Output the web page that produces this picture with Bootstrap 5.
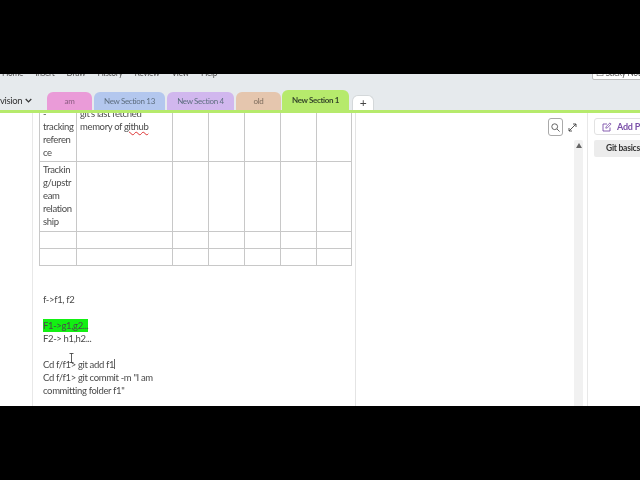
<!DOCTYPE html>
<html lang="en">
<head>
<meta charset="utf-8">
<title>Notes</title>
<link rel="stylesheet" href="https://cdn.jsdelivr.net/npm/bootstrap@5.3.0/dist/css/bootstrap.min.css">
<style>
html,body{height:100%;background:#000;overflow:hidden}
body{padding-top:74px;font-family:Lato,"Liberation Sans",sans-serif;color:#444}
.app{height:332px;width:640px;overflow:hidden;background:#e6eaed;display:flex;flex-direction:column;filter:blur(.4px)}
.menu-strip{height:6px;flex:none;display:flex;align-items:flex-end;font-size:8.5px;letter-spacing:-.35px;line-height:13px;color:#555;position:relative;padding-left:2px}
.menu-strip span{margin-right:12px;white-space:nowrap}
.sticky-btn{position:absolute;left:592px;top:-8px;width:60px;height:14px;background:#fff;border:1px solid #bbb;border-radius:2px;font-size:8.5px;line-height:12px;padding-left:3px;overflow:hidden;white-space:nowrap}
.tab-row{height:29px;flex:none;display:flex;align-items:flex-end;padding-left:47px;gap:2px;position:relative;margin-top:1px}
.vis{position:absolute;left:0;bottom:3px;font-size:9.5px;letter-spacing:-.35px;line-height:13px;color:#333;display:flex;align-items:center;gap:3px}
.stab{height:18px;border-radius:6px 6px 0 0;font-size:8px;letter-spacing:-.35px;line-height:18px;text-align:center;color:#5e6f80;white-space:nowrap}
.t-am{width:45px;background:#ea9bd8;color:#8a5a80}
.t-13{width:71px;background:#b3c7ee}
.t-4{width:67px;background:#d1b7ee}
.t-old{width:45px;background:#e5c6ae;color:#7c6b5c}
.t-act{width:67px;height:20px;background:#b6ea6c;color:#35452a;font-weight:700;line-height:20px;margin-left:-1px}
.t-add{width:22px;height:15px;background:#fff;border:1px solid #d4d8da;border-bottom:0;border-radius:6px 6px 0 0;margin-left:1px;font-size:12px;line-height:14px;color:#444}
.rule{height:3px;flex:none;background:#b6ea6c}
.work{flex:1;min-height:0;display:flex;background:#fff}
.gutter{width:33px;flex:none;border-right:1px solid #e8e8e8}
.sheet{width:323px;flex:none;border-right:1px solid #e4e4e4;overflow:hidden;padding-left:6px;font-size:9.5px;letter-spacing:-.35px;line-height:13px;color:#4a4a4a}
.grid-tbl{width:312px;table-layout:fixed;margin:-9px 0 0 0;border-color:#c8c8c8;--bs-table-color:#4a4a4a}
.grid-tbl td{padding:2px 2px 2px 3px;border:1px solid #c8c8c8;white-space:nowrap;overflow:hidden}
.grid-tbl tr.tall td{padding:1px 2px 3px 3px}
.grid-tbl tr.blank td{height:17px;padding:0}
.squig{text-decoration:underline wavy #d33;text-decoration-thickness:.6px;text-underline-offset:1px}
.prose{margin-top:27px;padding-left:4px;position:relative}
.hl{background:#12f012;display:inline-block;width:45px;white-space:nowrap}
.ibeam{position:absolute;left:30px;top:60px;width:5px;height:10px}
.caret{display:inline-block;width:1px;height:10px;background:#666;vertical-align:-1px}
.canvas{flex:1;display:flex;flex-direction:column;align-items:flex-end;padding:5px 4px 0 0;gap:4px;border-right:1px solid #e8e8e8}
.zoomrow{display:flex;gap:5px;align-items:center;margin-right:6px}
.search-btn{width:15px;height:18px;border:1px solid #aaa;border-radius:3px;display:flex;align-items:center;justify-content:center}
.scroll{width:9px;flex:1;background:#f1f1f1;display:flex;justify-content:center;padding-top:3px;border-radius:2px 2px 0 0}
.scroll i{display:block;width:0;height:0;border:3.5px solid transparent;border-top:0;border-bottom:5px solid #666}
.pane{width:52px;flex:none;padding:5px 0 0 6px;overflow:hidden}
.add-page{width:70px;height:17px;background:#fff;border:1px solid #e2e2e2;border-radius:3px;color:#7a4fa8;font-size:9px;letter-spacing:-.2px;display:flex;align-items:center;gap:5px;padding-left:7px;white-space:nowrap;font-weight:700}
.page-sel{width:70px;height:17px;margin-top:5px;background:#ececec;border-radius:2px;font-size:8.5px;letter-spacing:-.25px;line-height:16px;font-weight:700;padding-left:12px;color:#333;white-space:nowrap}
</style>
</head>
<body>
<div class="app">
  <div class="menu-strip">
    <span>Home</span><span>Insert</span><span>Draw</span><span>History</span><span>Review</span><span>View</span><span>Help</span>
    <div class="sticky-btn">☐ Sticky Notes</div>
  </div>
  <div class="tab-row">
    <div class="vis">vision <svg width="7" height="5" viewBox="0 0 7 5"><path d="M.7 1l2.8 2.8L6.3 1" fill="none" stroke="#333" stroke-width="1.2"/></svg></div>
    <div class="stab t-am">am</div>
    <div class="stab t-13">New Section 13</div>
    <div class="stab t-4">New Section 4</div>
    <div class="stab t-old">old</div>
    <div class="stab t-act">New Section 1</div>
    <div class="stab t-add">+</div>
  </div>
  <div class="rule"></div>
  <div class="work">
    <div class="gutter"></div>
    <div class="sheet">
      <table class="table table-bordered grid-tbl">
        <colgroup><col style="width:37px"><col style="width:96px"><col style="width:36px"><col style="width:36px"><col style="width:36px"><col style="width:36px"><col style="width:35px"></colgroup>
        <tr><td class="align-top">-<br>tracking<br>referen<br>ce</td><td class="align-top">git's last fetched<br>memory of <span class="squig">github</span></td><td></td><td></td><td></td><td></td><td></td></tr>
        <tr class="tall"><td class="align-top">Trackin<br>g/upstr<br>eam<br>relation<br>ship</td><td></td><td></td><td></td><td></td><td></td><td></td></tr>
        <tr class="blank"><td></td><td></td><td></td><td></td><td></td><td></td><td></td></tr>
        <tr class="blank"><td></td><td></td><td></td><td></td><td></td><td></td><td></td></tr>
      </table>
      <div class="prose">
        <div>f-&gt;f1, f2</div>
        <div>&nbsp;</div>
        <div><span class="hl">F1-&gt;g1,g2...</span></div>
        <div>F2-&gt; h1,h2...</div>
        <div>&nbsp;</div>
        <div>Cd f/f1&gt; git add f1<span class="caret"></span></div>
        <div>Cd f/f1&gt; git commit -m "I am<br>committing folder f1"</div>
        <svg class="ibeam" viewBox="0 0 5 10"><path d="M.5.5h4M2.5.5v9M.5 9.5h4" fill="none" stroke="#333" stroke-width=".8"/></svg>
      </div>
    </div>
    <div class="canvas">
      <div class="zoomrow">
        <div class="search-btn"><svg width="9" height="9" viewBox="0 0 9 9"><circle cx="3.7" cy="3.7" r="2.9" fill="none" stroke="#555" stroke-width=".9"/><path d="M6 6l2.6 2.6" stroke="#555" stroke-width=".9"/></svg></div>
        <svg width="9" height="9" viewBox="0 0 9 9"><path d="M1 8L8 1M5 1h3v3M1 5v3h3" fill="none" stroke="#444" stroke-width=".9"/></svg>
      </div>
      <div class="scroll"><i></i></div>
    </div>
    <div class="pane">
      <div class="add-page"><svg width="10" height="10" viewBox="0 0 10 10" class="flex-none"><path d="M8 5.5V9H1V2h4" fill="none" stroke="#7a4fa8" stroke-width=".9"/><path d="M3.8 6.2l.3-1.5L8 .9l1.1 1.1-3.8 3.9z" fill="none" stroke="#7a4fa8" stroke-width=".8"/></svg>Add Page</div>
      <div class="page-sel">Git basics</div>
    </div>
  </div>
</div>
<script src="https://cdn.jsdelivr.net/npm/bootstrap@5.3.0/dist/js/bootstrap.bundle.min.js"></script>
</body>
</html>
